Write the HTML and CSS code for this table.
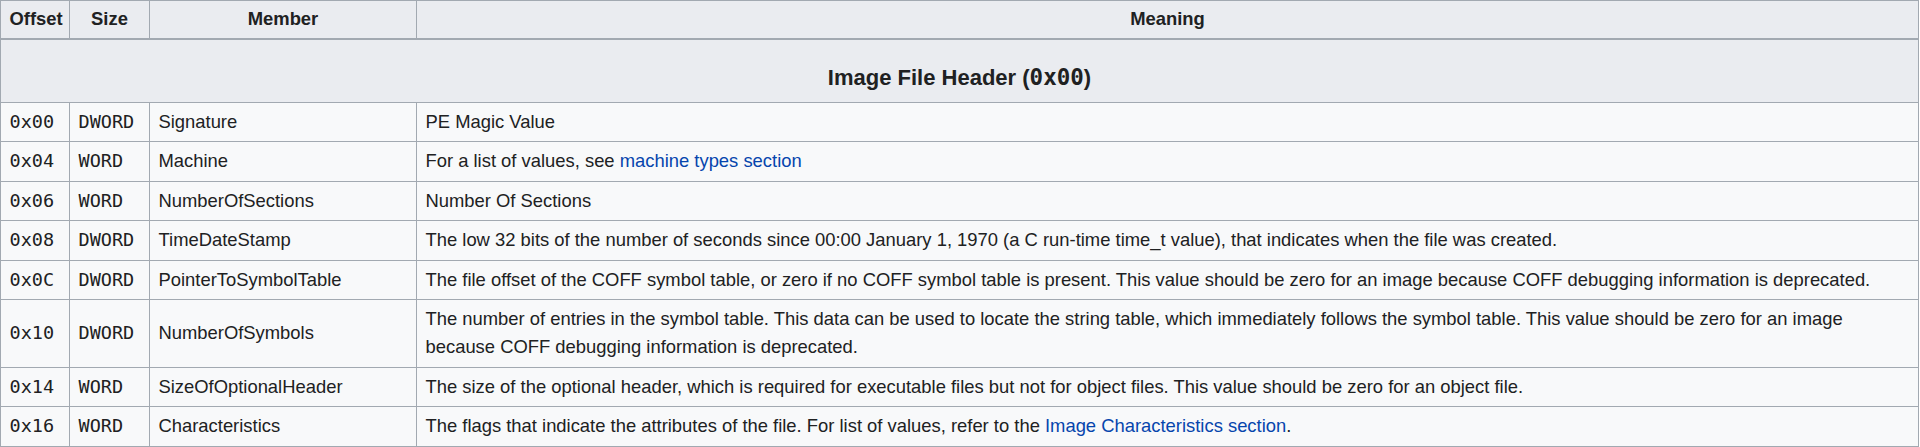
FILE: index.html
```html
<!DOCTYPE html>
<html lang="en">
<head>
<meta charset="utf-8">
<title>Image File Header</title>
<link rel="stylesheet" href="styles.css">
</head>
<body>
<table class="wikitable">
  <colgroup>
    <col class="c-offset">
    <col class="c-size">
    <col class="c-member">
    <col class="c-meaning">
  </colgroup>
  <thead>
    <tr>
      <th>Offset</th>
      <th>Size</th>
      <th>Member</th>
      <th>Meaning</th>
    </tr>
  </thead>
  <tbody>
    <tr>
      <th colspan="4" class="section">Image File Header (<code>0x00</code>)</th>
    </tr>
    <tr>
      <td><code>0x00</code></td>
      <td><code>DWORD</code></td>
      <td>Signature</td>
      <td>PE Magic Value</td>
    </tr>
    <tr>
      <td><code>0x04</code></td>
      <td><code>WORD</code></td>
      <td>Machine</td>
      <td>For a list of values, see <a href="#">machine types section</a></td>
    </tr>
    <tr>
      <td><code>0x06</code></td>
      <td><code>WORD</code></td>
      <td>NumberOfSections</td>
      <td>Number Of Sections</td>
    </tr>
    <tr>
      <td><code>0x08</code></td>
      <td><code>DWORD</code></td>
      <td>TimeDateStamp</td>
      <td>The low 32 bits of the number of seconds since 00:00 January 1, 1970 (a C run-time time_t value), that indicates when the file was created.</td>
    </tr>
    <tr>
      <td><code>0x0C</code></td>
      <td><code>DWORD</code></td>
      <td>PointerToSymbolTable</td>
      <td>The file offset of the COFF symbol table, or zero if no COFF symbol table is present. This value should be zero for an image because COFF debugging information is deprecated.</td>
    </tr>
    <tr>
      <td><code>0x10</code></td>
      <td><code>DWORD</code></td>
      <td>NumberOfSymbols</td>
      <td>The number of entries in the symbol table. This data can be used to locate the string table, which immediately follows the symbol table. This value should be zero for an image because COFF debugging information is deprecated.</td>
    </tr>
    <tr>
      <td><code>0x14</code></td>
      <td><code>WORD</code></td>
      <td>SizeOfOptionalHeader</td>
      <td>The size of the optional header, which is required for executable files but not for object files. This value should be zero for an object file.</td>
    </tr>
    <tr>
      <td><code>0x16</code></td>
      <td><code>WORD</code></td>
      <td>Characteristics</td>
      <td>The flags that indicate the attributes of the file. For list of values, refer to the <a href="#">Image Characteristics section</a>.</td>
    </tr>
  </tbody>
</table>
</body>
</html>
```
FILE: styles.css
```css
html, body {
  margin: 0;
  padding: 0;
  background: #ffffff;
}

body {
  font-family: "Liberation Sans", Arial, sans-serif;
  color: #202122;
}

.wikitable {
  width: 1919px;
  table-layout: fixed;
  border-collapse: collapse;
  background: #f8f9fa;
  color: #202122;
  font-size: 18.4px;
  line-height: 28px;
}

.c-offset { width: 69px; }
.c-size { width: 80px; }
.c-member { width: 267px; }

.wikitable th,
.wikitable td {
  border: 1px solid #a2a9b1;
  padding: 5.25px 8.5px;
  text-align: left;
  vertical-align: middle;
}

.wikitable th {
  background: #eaecf0;
  font-weight: bold;
  text-align: center;
  padding-top: 4.25px;
  padding-bottom: 4.25px;
}

.wikitable th.section {
  font-size: 22px;
  line-height: 30px;
  padding: 23.5px 8px 8.5px;
  border-top: 2px solid #a2a9b1;
}

.wikitable code {
  font-family: "DejaVu Sans Mono", "Liberation Mono", monospace;
  font-size: 18.5px;
  line-height: 18px;
}

.wikitable th.section code {
  font-size: 22.5px;
  font-weight: bold;
}

.wikitable a {
  color: #0645ad;
  text-decoration: none;
}
```
